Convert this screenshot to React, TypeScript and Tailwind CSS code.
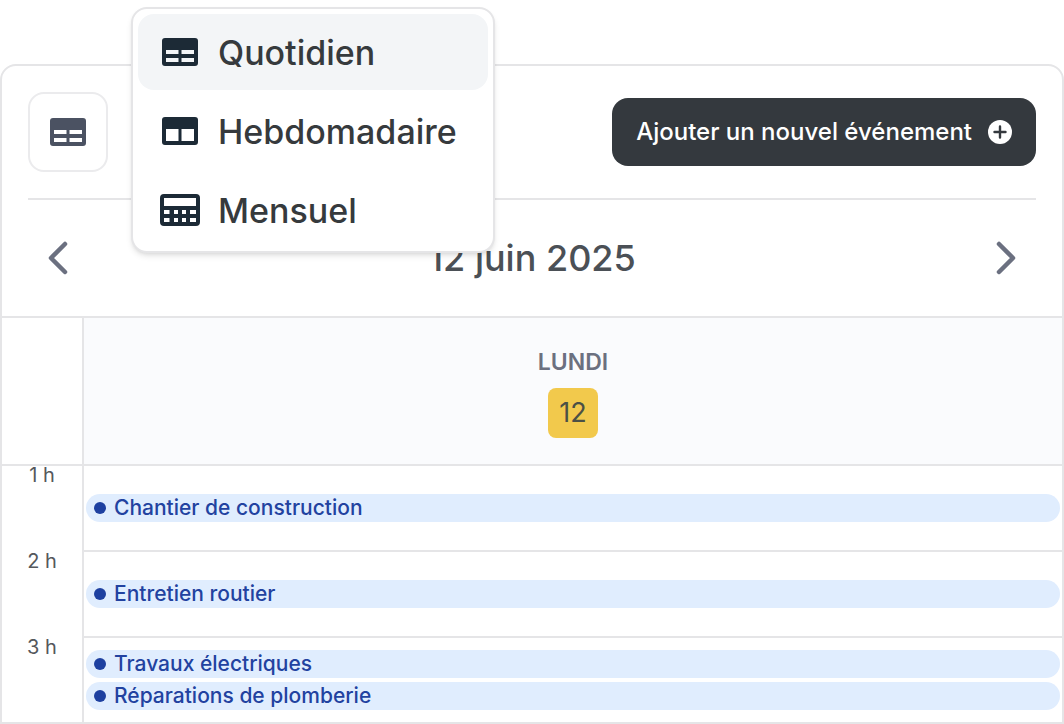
import { useState, type ReactNode } from "react";

type View = "day" | "week" | "month";

interface Hour {
  label: string;
  events: string[];
}

const HOURS: Hour[] = [
  { label: "1 h", events: ["Chantier de construction"] },
  { label: "2 h", events: ["Entretien routier"] },
  { label: "3 h", events: ["Travaux électriques", "Réparations de plomberie"] },
];

function DayIcon() {
  return (
    <svg className="h-8 w-10" viewBox="0 0 40 32" fill="currentColor" fillRule="evenodd" aria-hidden="true">
      <path d="M5 2h30a3 3 0 0 1 3 3v22a3 3 0 0 1-3 3H5a3 3 0 0 1-3-3V5a3 3 0 0 1 3-3ZM6 14v4h12.5v-4ZM21.5 14v4H34v-4ZM6 22v4h12.5v-4ZM21.5 22v4H34v-4Z" />
    </svg>
  );
}

function WeekIcon() {
  return (
    <svg className="h-8 w-10" viewBox="0 0 40 32" fill="currentColor" fillRule="evenodd" aria-hidden="true">
      <path d="M5 2h30a3 3 0 0 1 3 3v22a3 3 0 0 1-3 3H5a3 3 0 0 1-3-3V5a3 3 0 0 1 3-3ZM6 14v12h12.5V14ZM21.5 14v12H34V14Z" />
    </svg>
  );
}

function MonthIcon() {
  return (
    <svg className="h-8 w-10" viewBox="0 0 40 32" fill="currentColor" fillRule="evenodd" aria-hidden="true">
      <path d="M4 0h32a4 4 0 0 1 4 4v24a4 4 0 0 1-4 4H4a4 4 0 0 1-4-4V4a4 4 0 0 1 4-4ZM4 4v8h32V4ZM4 16v4h5.5v-4ZM14 16v4h4v-4ZM22 16v4h4v-4ZM30 16v4h6v-4ZM4 24v4h5.5v-4ZM14 24v4h4v-4ZM22 24v4h4v-4ZM30 24v4h6v-4Z" />
    </svg>
  );
}

const VIEWS: { id: View; label: string; icon: ReactNode }[] = [
  { id: "day", label: "Quotidien", icon: <DayIcon /> },
  { id: "week", label: "Hebdomadaire", icon: <WeekIcon /> },
  { id: "month", label: "Mensuel", icon: <MonthIcon /> },
];

function ViewMenu({ selected, onSelect }: { selected: View; onSelect: (v: View) => void }) {
  return (
    <div
      role="menu"
      className="absolute -top-[85px] left-[103px] z-10 flex w-[364px] flex-col gap-[3px] rounded-2xl border-2
                 border-[#e5e5e7] bg-white p-[5px] pb-[3px] shadow-md"
    >
      {VIEWS.map((v) => (
        <button
          key={v.id}
          role="menuitem"
          onClick={() => onSelect(v.id)}
          className={`flex h-[76px] items-center gap-[18px] rounded-2xl pl-[22px] text-[34px] font-medium text-[#363a3d]
                      ${v.id === selected ? "bg-[#f3f5f7]" : "bg-white"}`}
        >
          <span className="text-[#1c2a36]">{v.icon}</span>
          {v.label}
        </button>
      ))}
    </div>
  );
}

function Chevron({ d }: { d: string }) {
  return (
    <svg
      className="h-9 w-6" viewBox="0 0 24 36" fill="none" stroke="currentColor"
      strokeWidth={4.5} strokeLinecap="round" strokeLinejoin="round" aria-hidden="true"
    >
      <path d={d} />
    </svg>
  );
}

function EventPill({ title }: { title: string }) {
  return (
    <button className="flex h-7 items-center gap-2 rounded-[14px] bg-[#e0edfe] px-2 text-[21px] font-medium text-[#2242a0]">
      <span className="size-3 rounded-full bg-[#1e40a0]" />
      {title}
    </button>
  );
}

export default function App() {
  const [view, setView] = useState<View>("day");
  const [open, setOpen] = useState(true);

  return (
    <main className="bg-white pt-16 font-[Inter,sans-serif]">
      <section className="rounded-t-2xl border-2 border-[#e5e5e7]">
        <header className="mx-[26px] flex items-center justify-between border-b-2 border-[#e5e5e7] py-[26px]">
          <div className="relative">
            <button
              aria-label="Changer de vue"
              aria-expanded={open}
              onClick={() => setOpen((p) => !p)}
              className="flex size-20 items-center justify-center rounded-2xl border-2 border-[#ebebed] text-[#4b5262]"
            >
              {VIEWS.find((v) => v.id === view)?.icon}
            </button>
            {open && <ViewMenu selected={view} onSelect={setView} />}
          </div>
          <button className="flex h-[68px] items-center gap-4 rounded-2xl bg-[#34393e] px-6 text-2xl font-medium text-white">
            Ajouter un nouvel événement
            <svg className="size-6" viewBox="0 0 24 24" aria-hidden="true">
              <circle cx="12" cy="12" r="12" fill="currentColor" />
              <path d="M12 6.5v11M6.5 12h11" stroke="#34393e" strokeWidth={2.4} strokeLinecap="round" />
            </svg>
          </button>
        </header>

        <div className="flex h-[116px] items-center justify-between px-11 text-[#6b7080]">
          <button aria-label="Jour précédent">
            <Chevron d="M19 4 5 18l14 14" />
          </button>
          <h2 className="text-4xl font-medium text-[#4b5056]">12 juin 2025</h2>
          <button aria-label="Jour suivant">
            <Chevron d="m5 4 14 14L5 32" />
          </button>
        </div>

        <div className="flex border-y-2 border-[#e5e5e7]">
          <div className="w-20 shrink-0" />
          <div className="flex h-[146px] grow flex-col items-center gap-2.5 border-l-2 border-[#e5e5e7] bg-[#fafbfd] pt-7">
            <span className="text-[23px] leading-8 font-semibold text-[#6b7080]">LUNDI</span>
            <span className="flex size-[50px] items-center justify-center rounded-lg bg-[#f2c94c] text-[27px] text-[#4b5046]">
              12
            </span>
          </div>
        </div>

        {HOURS.map((hour) => (
          <div key={hour.label} className="group flex">
            <div className="w-20 shrink-0 text-center text-xl leading-[18px] text-[#55585c]">{hour.label}</div>
            <div
              className="flex min-h-[86px] grow flex-col justify-center gap-1 border-b-2 border-l-2 border-[#e5e5e7]
                         px-0.5 group-last:min-h-[84px] group-last:border-b-0"
            >
              {hour.events.map((title) => (
                <EventPill key={title} title={title} />
              ))}
            </div>
          </div>
        ))}
      </section>
    </main>
  );
}
